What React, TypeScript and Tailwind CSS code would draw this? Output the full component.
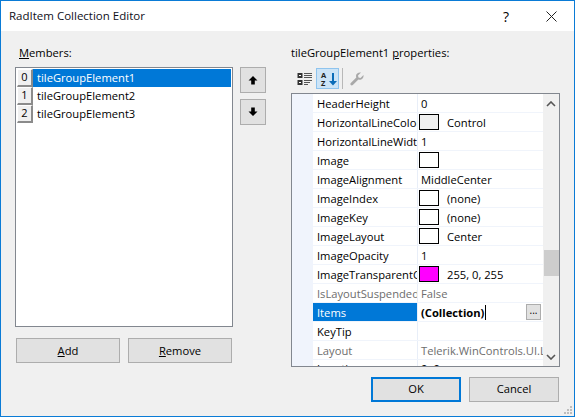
import React from 'react';

type Prop = {
  name: string;
  value?: string;
  swatch?: string;
  disabled?: boolean;
  bold?: boolean;
  selected?: boolean;
  clipped?: boolean;
};

const props: Prop[] = [
  { name: 'HeaderHeight', value: '0' },
  { name: 'HorizontalLineColor', value: 'Control', swatch: 'bg-[#f0f0f0]' },
  { name: 'HorizontalLineWidth', value: '1' },
  { name: 'Image', swatch: 'bg-white' },
  { name: 'ImageAlignment', value: 'MiddleCenter' },
  { name: 'ImageIndex', value: '(none)', swatch: 'bg-white' },
  { name: 'ImageKey', value: '(none)', swatch: 'bg-white' },
  { name: 'ImageLayout', value: 'Center', swatch: 'bg-white' },
  { name: 'ImageOpacity', value: '1' },
  { name: 'ImageTransparentColor', value: '255, 0, 255', swatch: 'bg-[#ff00ff]' },
  { name: 'IsLayoutSuspended', value: 'False', disabled: true },
  { name: 'Items', value: '(Collection)', bold: true, selected: true },
  { name: 'KeyTip' },
  { name: 'Layout', value: 'Telerik.WinControls.UI.Layouts', disabled: true },
  { name: 'Location', value: '0, 0', bold: true, clipped: true },
];

const Btn = ({ children, className }: { children: React.ReactNode; className: string }) => (
  <button className={`flex items-center justify-center bg-[#e1e1e1] border border-[#adadad] ${className}`}>
    {children}
  </button>
);

const Arrow = ({ down }: { down?: boolean }) => (
  <svg width="10" height="10" viewBox="0 0 10 10" className={down ? 'rotate-180' : ''}>
    <path d="M5 1 L9.5 5.5 L6.8 5.5 L6.8 9.5 L3.2 9.5 L3.2 5.5 L0.5 5.5 Z" fill="#000" />
  </svg>
);

const PropRow = ({ p }: { p: Prop }) => (
  <div className="flex h-[19px] shrink-0 border-b border-[#f0f4fb]">
    <div
      className={`w-[105px] shrink-0 overflow-hidden whitespace-nowrap pl-1 border-r border-[#e8eef8] ${
        p.clipped ? 'leading-[17px]' : 'leading-[20px]'
      } ${p.selected ? 'bg-[#0078d7] text-white' : p.disabled ? 'text-[#6d6d6d]' : 'text-black'}`}
    >
      {p.name}
    </div>
    <div
      className={`relative flex flex-1 overflow-hidden whitespace-nowrap pl-[1px] ${
        p.clipped ? 'items-start' : 'items-center'
      } ${p.disabled ? 'text-[#6d6d6d]' : 'text-black'} ${p.bold ? 'font-bold' : ''}`}
    >
      {p.swatch && <span className={`mr-2 h-[16px] w-[20px] shrink-0 border border-black ${p.swatch}`} />}
      <span className={`${p.swatch ? '' : 'pl-[2px]'} ${p.clipped ? 'leading-[17px]' : 'pt-[1px] leading-[20px]'}`}>
        {p.value}
      </span>
      {p.selected && <span className="ml-[1px] h-[15px] w-[1px] bg-black" />}
      {p.selected && (
        <span className="absolute right-[2px] top-[1px] flex h-[16px] w-[15px] items-center justify-center border border-[#adadad] bg-[#e1e1e1] pb-1 text-[10px] font-normal">
          ...
        </span>
      )}
    </div>
  </div>
);

export default function App() {
  return (
    <div className="relative flex h-[417px] w-[575px] flex-col overflow-hidden border border-[#0a7bd6] bg-[#f0f0f0] font-['Open_Sans','Noto_Sans',sans-serif] text-[11.2px] text-black">
      <div className="flex h-[30px] shrink-0 items-center bg-white pl-[8px]">
        <span className="text-[11.5px] text-[#10101a]">RadItem Collection Editor</span>
        <span className="ml-auto mr-[37px] text-[14px]">?</span>
        <svg width="11" height="11" viewBox="0 0 11 11" className="mr-[17px]">
          <path d="M0.5 0.5 L10.5 10.5 M10.5 0.5 L0.5 10.5" stroke="#222" strokeWidth="1" fill="none" />
        </svg>
      </div>

      <div className="flex flex-1 pl-[14px] pt-[14px]">
        <div className="flex w-[218px] shrink-0 flex-col">
          <div className="h-[22px] pl-[4px] leading-[16px]">
            <span className="underline">M</span>embers:
          </div>
          <div className="flex h-[260px] flex-col gap-0 border border-[#82878f] bg-white p-px">
            {['tileGroupElement1', 'tileGroupElement2', 'tileGroupElement3'].map((t, i) => (
              <div key={t} className="flex h-[18px] items-center">
                <span className="flex h-[18px] w-[16px] shrink-0 items-center justify-center border-t border-l border-t-white border-l-white border-r-2 border-b-2 border-r-[#8b8b8b] border-b-[#8b8b8b] bg-[#f0f0f0] text-[11px]">
                  {i}
                </span>
                <span
                  className={`flex h-full flex-1 items-center pl-[4px] ${
                    i === 0 ? 'bg-[#0078d7] text-white' : ''
                  }`}
                >
                  {t}
                </span>
              </div>
            ))}
          </div>
          <div className="mt-[11px] flex gap-[8px] pl-px">
            <Btn className="h-[25px] w-[104px] pt-[1px]">
              <span>
                <span className="underline">A</span>dd
              </span>
            </Btn>
            <Btn className="h-[25px] w-[104px] pt-[1px]">
              <span>
                <span className="underline">R</span>emove
              </span>
            </Btn>
          </div>
        </div>

        <div className="ml-[7px] flex w-[26px] shrink-0 flex-col gap-[6px] pt-[22px]">
          <Btn className="h-[26px] w-[26px]">
            <Arrow />
          </Btn>
          <Btn className="h-[26px] w-[26px]">
            <Arrow down />
          </Btn>
        </div>

        <div className="ml-[25px] flex w-[269px] shrink-0 flex-col">
          <div className="h-[23px] leading-[16px]">
            tileGroupElement1 <span className="underline">p</span>roperties:
          </div>
          <div className="flex h-[25px] items-start pl-[2px]">
            <span className="flex h-[21px] w-[22px] items-center justify-center">
              <svg width="15" height="14" viewBox="0 0 15 14">
                <rect x="0.5" y="1" width="5" height="5" fill="#333" />
                <rect x="2" y="3" width="2" height="1" fill="#fff" />
                <rect x="0.5" y="8" width="5" height="5" fill="#333" />
                <rect x="2" y="10" width="2" height="1" fill="#fff" />
                <path d="M7 1.5h8M7 3.5h8M7 5.5h8M7 8.5h8M7 10.5h6M7 12.5h4" stroke="#555" strokeWidth="1" />
              </svg>
            </span>
            <span className="ml-[1px] flex h-[21px] w-[23px] flex-col items-start justify-center border border-[#8fc4ee] bg-[#cce4f7] pl-[4px]">
              <span className="relative flex h-full w-full flex-col justify-center text-[7.5px] font-bold leading-[8px] text-[#222]">
                <span>A</span>
                <span>Z</span>
                <svg width="8" height="13" viewBox="0 0 8 13" className="absolute left-[8px] top-[4px]">
                  <path d="M3 0h2v8h3L4 12.5 0 8h3z" fill="#0b6cb8" />
                </svg>
              </span>
            </span>
            <span className="ml-[3px] h-[21px] w-px bg-[#b8b8b8]" />
            <span className="ml-[7px] flex h-[21px] items-center">
              <svg width="14" height="14" viewBox="0 0 14 14">
                <path d="M13.5 3 L10.5 6 L8.5 5.5 L8 3.5 L11 0.5 C8.5 0 6 1.5 6 4 C6 4.6 6.1 5 6.3 5.5 L0.8 11 C0.2 11.6 0.2 12.4 0.8 13 C1.4 13.6 2.2 13.6 2.8 13 L8.4 7.6 C11 8.6 14 6.5 13.5 3 Z" fill="#a9a9a9" />
              </svg>
            </span>
          </div>
          <div className="relative flex h-[274px] border border-[#82878f] bg-white">
            <div className="w-[21px] shrink-0 bg-[#f0f4fc]" />
            <div className="flex w-[230px] shrink-0 flex-col overflow-hidden">
              {props.map(p => (
                <PropRow key={p.name} p={p} />
              ))}
            </div>
            <div className="flex w-[16px] shrink-0 flex-col items-center bg-[#f0f0f0]">
              <svg width="10" height="6" viewBox="0 0 10 6" className="mt-[7px]">
                <path d="M1 5 L5 1 L9 5" stroke="#555" strokeWidth="1.6" fill="none" />
              </svg>
              <span className="mt-[143px] h-[26px] w-[15px] bg-[#cdcdcd]" />
              <svg width="10" height="6" viewBox="0 0 10 6" className="mt-auto mb-[6px]">
                <path d="M1 1 L5 5 L9 1" stroke="#555" strokeWidth="1.6" fill="none" />
              </svg>
            </div>
          </div>
          <div className="mt-[10px] mr-[1px] flex justify-end gap-[8px]">
            <Btn className="h-[25px] w-[90px] !border-2 !border-[#0078d7]">OK</Btn>
            <Btn className="h-[25px] w-[90px]">Cancel</Btn>
          </div>
        </div>
      </div>

      <svg width="10" height="10" viewBox="0 0 10 10" className="absolute bottom-[1px] right-[1px]">
        <path d="M7 1h2v2H7zM4 4h2v2H4zM7 4h2v2H7zM1 7h2v2H1zM4 7h2v2H4zM7 7h2v2H7z" fill="#bdbdbd" />
      </svg>
    </div>
  );
}
